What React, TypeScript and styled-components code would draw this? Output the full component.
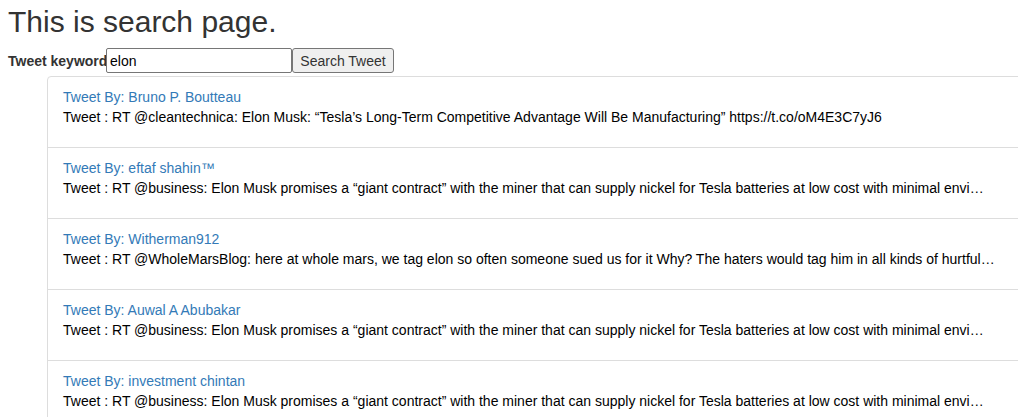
import React from "react";
import styled, { createGlobalStyle } from "styled-components";

const Global = createGlobalStyle`
  html, body { margin: 0; padding: 0; overflow: hidden; background: #fff; }
  body {
    font-family: "Liberation Sans", Arial, Helvetica, sans-serif;
    font-size: 14px;
    line-height: 20px;
    color: #333;
  }
`;

const Page = styled.div`
  padding: 0 8px;
`;

const Title = styled.h2`
  margin: 5px 0 10px;
  font-size: 30px;
  font-weight: 400;
  line-height: 33px;
  color: #333;
`;

const SearchForm = styled.form`
  display: flex;
  align-items: center;
  height: 25px;
  margin: 0;
`;

const Label = styled.label`
  font-weight: 700;
  font-size: 14px;
  color: #333;
  white-space: nowrap;
  width: 98px;
`;

const Input = styled.input`
  box-sizing: border-box;
  width: 186px;
  height: 25px;
  margin: 0;
  padding: 0 3px;
  border: 1px solid #767676;
  border-radius: 2px;
  font-family: "Liberation Sans", Arial, sans-serif;
  font-size: 14px;
  color: #000;
`;

const Button = styled.button`
  box-sizing: border-box;
  height: 25px;
  width: 102px;
  margin: 0;
  padding: 0;
  border: 1px solid #767676;
  border-radius: 3px;
  background: #efefef;
  font-family: "Liberation Sans", Arial, sans-serif;
  font-size: 14px;
  color: #333;
`;

const List = styled.ul`
  margin: 3px -40px 0 0;
  padding: 0 0 0 39px;
  list-style: none;
`;

const Item = styled.li<{ $first?: boolean }>`
  padding: 10px 15px;
  margin-bottom: -1px;
  border: 1px solid #ddd;
  border-radius: ${(p) => (p.$first ? "4px 4px 0 0" : "0")};
  background: #fff;
  white-space: nowrap;
`;

const Author = styled.div`
  color: #337ab7;
`;

const Text = styled.p`
  margin: 0 0 10px;
  color: #000;
`;

const business =
  "RT @business: Elon Musk promises a “giant contract” with the miner that can supply nickel for Tesla batteries at low cost with minimal envi…";

const tweets = [
  {
    by: "Bruno P. Boutteau",
    text: "RT @cleantechnica: Elon Musk: “Tesla’s Long-Term Competitive Advantage Will Be Manufacturing” https://t.co/oM4E3C7yJ6",
  },
  { by: "eftaf shahin™", text: business },
  {
    by: "Witherman912",
    text: "RT @WholeMarsBlog: here at whole mars, we tag elon so often someone sued us for it Why? The haters would tag him in all kinds of hurtful…",
  },
  { by: "Auwal A Abubakar", text: business },
  { by: "investment chintan", text: business },
];

export default function App() {
  return (
    <Page>
      <Global />
      <Title>This is search page.</Title>
      <SearchForm onSubmit={(e) => e.preventDefault()}>
        <Label>Tweet keyword</Label>
        <Input defaultValue="elon" />
        <Button type="submit">Search Tweet</Button>
      </SearchForm>
      <List>
        {tweets.map((t, i) => (
          <Item key={i} $first={i === 0}>
            <Author>Tweet By: {t.by}</Author>
            <Text>Tweet : {t.text}</Text>
          </Item>
        ))}
      </List>
    </Page>
  );
}
